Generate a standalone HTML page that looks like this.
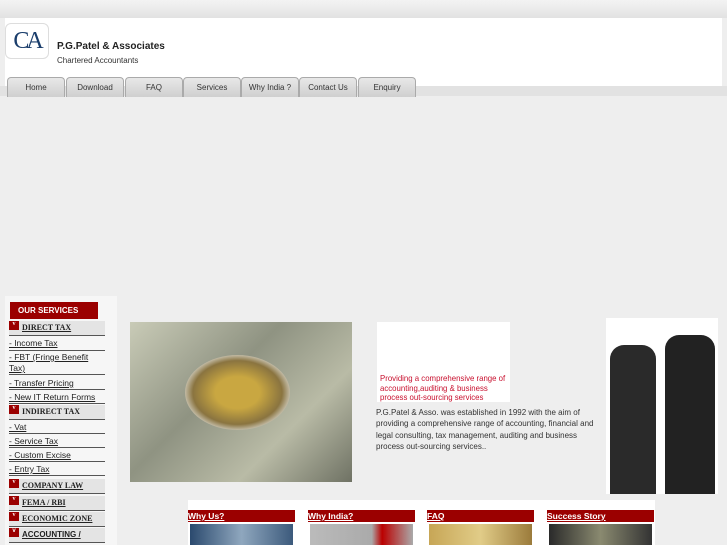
<!DOCTYPE html>
<html><head><style>
body{margin:0;width:727px;height:545px;overflow:hidden;background:#eeeeee;font-family:"Liberation Sans",sans-serif;position:relative}
.a{position:absolute}
.tab{position:absolute;top:77px;width:56px;height:19px;background:linear-gradient(#e8e8e8,#cfcfcf);border:1px solid #aaa;border-bottom:none;border-radius:4px 4px 0 0;font-size:8px;text-align:center;line-height:19px;color:#333}
.sb{position:absolute;left:9px;width:96px;font-size:8.5px;color:#222;border-bottom:1px solid #555}
.hd{font-family:"Liberation Serif",serif;font-weight:bold;font-size:8px;background:#e4e4e4}
.hd i{display:inline-block;width:10px;height:9px;background:#9b0000;margin-right:3px;vertical-align:top;color:#fff;font-style:normal;font-size:6px;text-align:center;line-height:7px}
.bh{position:absolute;top:510px;height:12px;background:#9b0000;color:#fff;font-size:8.5px;font-weight:bold;text-decoration:underline;line-height:12px}
</style></head><body>
<div class="a" style="left:0;top:0;width:727px;height:18px;background:linear-gradient(#f3f3f3,#e2e2e2)"></div>
<div class="a" style="left:5px;top:18px;width:717px;height:68px;background:#fff"></div>
<div class="a" style="left:5px;top:23px;width:42px;height:34px;border:1px solid #ddd;border-radius:6px;background:#fff;font-size:24px;color:#1a3d6b;font-family:'Liberation Serif',serif;line-height:34px;text-align:center;letter-spacing:-3px">CA</div>
<div class="a" style="left:57px;top:41px;font-size:10px;font-weight:bold;color:#222">P.G.Patel &amp; Associates</div>
<div class="a" style="left:57px;top:56px;font-size:8px;color:#333">Chartered Accountants</div>
<div class="a" style="left:0;top:86px;width:727px;height:10px;background:#e2e2e2"></div>
<div class="tab" style="left:7px">Home</div>
<div class="tab" style="left:66px">Download</div>
<div class="tab" style="left:125px">FAQ</div>
<div class="tab" style="left:183px">Services</div>
<div class="tab" style="left:241px">Why India ?</div>
<div class="tab" style="left:299px">Contact Us</div>
<div class="tab" style="left:358px">Enquiry</div>

<div class="a" style="left:5px;top:296px;width:112px;height:249px;background:#f6f6f6"></div>
<div class="a" style="left:10px;top:302px;width:88px;height:17px;background:#9b0000;color:#fff;font-size:8px;font-weight:bold;line-height:17px;padding-left:8px;box-sizing:border-box">OUR SERVICES</div>
<div class="sb hd" style="top:321px;height:14px;line-height:14px"><i>v</i><u>DIRECT TAX</u></div>
<div class="sb" style="top:338px;height:12px"><u>- Income Tax</u></div>
<div class="sb" style="top:352px;height:22px;line-height:11px"><u>- FBT (Fringe Benefit Tax)</u></div>
<div class="sb" style="top:378px;height:11px"><u>- Transfer Pricing</u></div>
<div class="sb" style="top:392px;height:11px"><u>- New IT Return Forms</u></div>
<div class="sb hd" style="top:405px;height:14px;line-height:14px"><i>v</i>INDIRECT TAX</div>
<div class="sb" style="top:422px;height:11px"><u>- Vat</u></div>
<div class="sb" style="top:436px;height:11px"><u>- Service Tax</u></div>
<div class="sb" style="top:450px;height:11px"><u>- Custom Excise</u></div>
<div class="sb" style="top:464px;height:11px"><u>- Entry Tax</u></div>
<div class="sb hd" style="top:479px;height:14px;line-height:14px"><i>v</i><u>COMPANY LAW</u></div>
<div class="sb hd" style="top:496px;height:14px;line-height:14px"><i>v</i><u>FEMA / RBI</u></div>
<div class="sb hd" style="top:512px;height:14px;line-height:14px"><i>v</i><u>ECONOMIC ZONE</u></div>
<div class="sb hd" style="top:528px;height:14px;line-height:14px;font-family:'Liberation Sans'"><i>v</i><u>ACCOUNTING /</u></div>

<div class="a" style="left:130px;top:322px;width:222px;height:160px;background:linear-gradient(135deg,#c9cbb7,#8f9382 40%,#b9bba6 70%,#6f7264)"></div>
<div class="a" style="left:185px;top:355px;width:105px;height:75px;border-radius:50%;background:radial-gradient(#c9a741 30%,#8a7440 60%,#d8d6cc 75%)"></div>
<div class="a" style="left:377px;top:322px;width:133px;height:80px;background:#fff"></div>
<div class="a" style="left:380px;top:374px;font-size:8.5px;line-height:9.5px;color:#c8102e;transform:scaleX(.92);transform-origin:left">Providing a comprehensive range of<br>accounting,auditing &amp; business<br>process out-sourcing services</div>
<div class="a" style="left:376px;top:407px;width:228px;font-size:8px;line-height:11.3px;color:#333">P.G.Patel &amp; Asso. was established in 1992 with the aim of providing a comprehensive range of accounting, financial and legal consulting, tax management, auditing and business process out-sourcing services..</div>
<div class="a" style="left:606px;top:318px;width:112px;height:176px;background:#fff"></div>
<div class="a" style="left:610px;top:345px;width:46px;height:149px;background:#2a2a2a;border-radius:14px 14px 0 0"></div>
<div class="a" style="left:665px;top:335px;width:50px;height:159px;background:#222;border-radius:14px 14px 0 0"></div>

<div class="a" style="left:188px;top:500px;width:467px;height:45px;background:#fff"></div>
<div class="bh" style="left:188px;width:107px">Why Us?</div>
<div class="bh" style="left:308px;width:107px">Why India?</div>
<div class="bh" style="left:427px;width:107px">FAQ</div>
<div class="bh" style="left:547px;width:107px">Success Story</div>
<div class="a" style="left:190px;top:524px;width:103px;height:21px;background:linear-gradient(90deg,#2b4a6e,#8fa7be,#3c5a7c)"></div>
<div class="a" style="left:310px;top:524px;width:103px;height:21px;background:linear-gradient(90deg,#bbb,#aaa 60%,#b00 70%,#aaa)"></div>
<div class="a" style="left:429px;top:524px;width:103px;height:21px;background:linear-gradient(90deg,#c7a656,#e1cc88,#9b7b3b)"></div>
<div class="a" style="left:549px;top:524px;width:103px;height:21px;background:linear-gradient(90deg,#2a2a2a,#8a8a70,#333)"></div>
</body></html>
